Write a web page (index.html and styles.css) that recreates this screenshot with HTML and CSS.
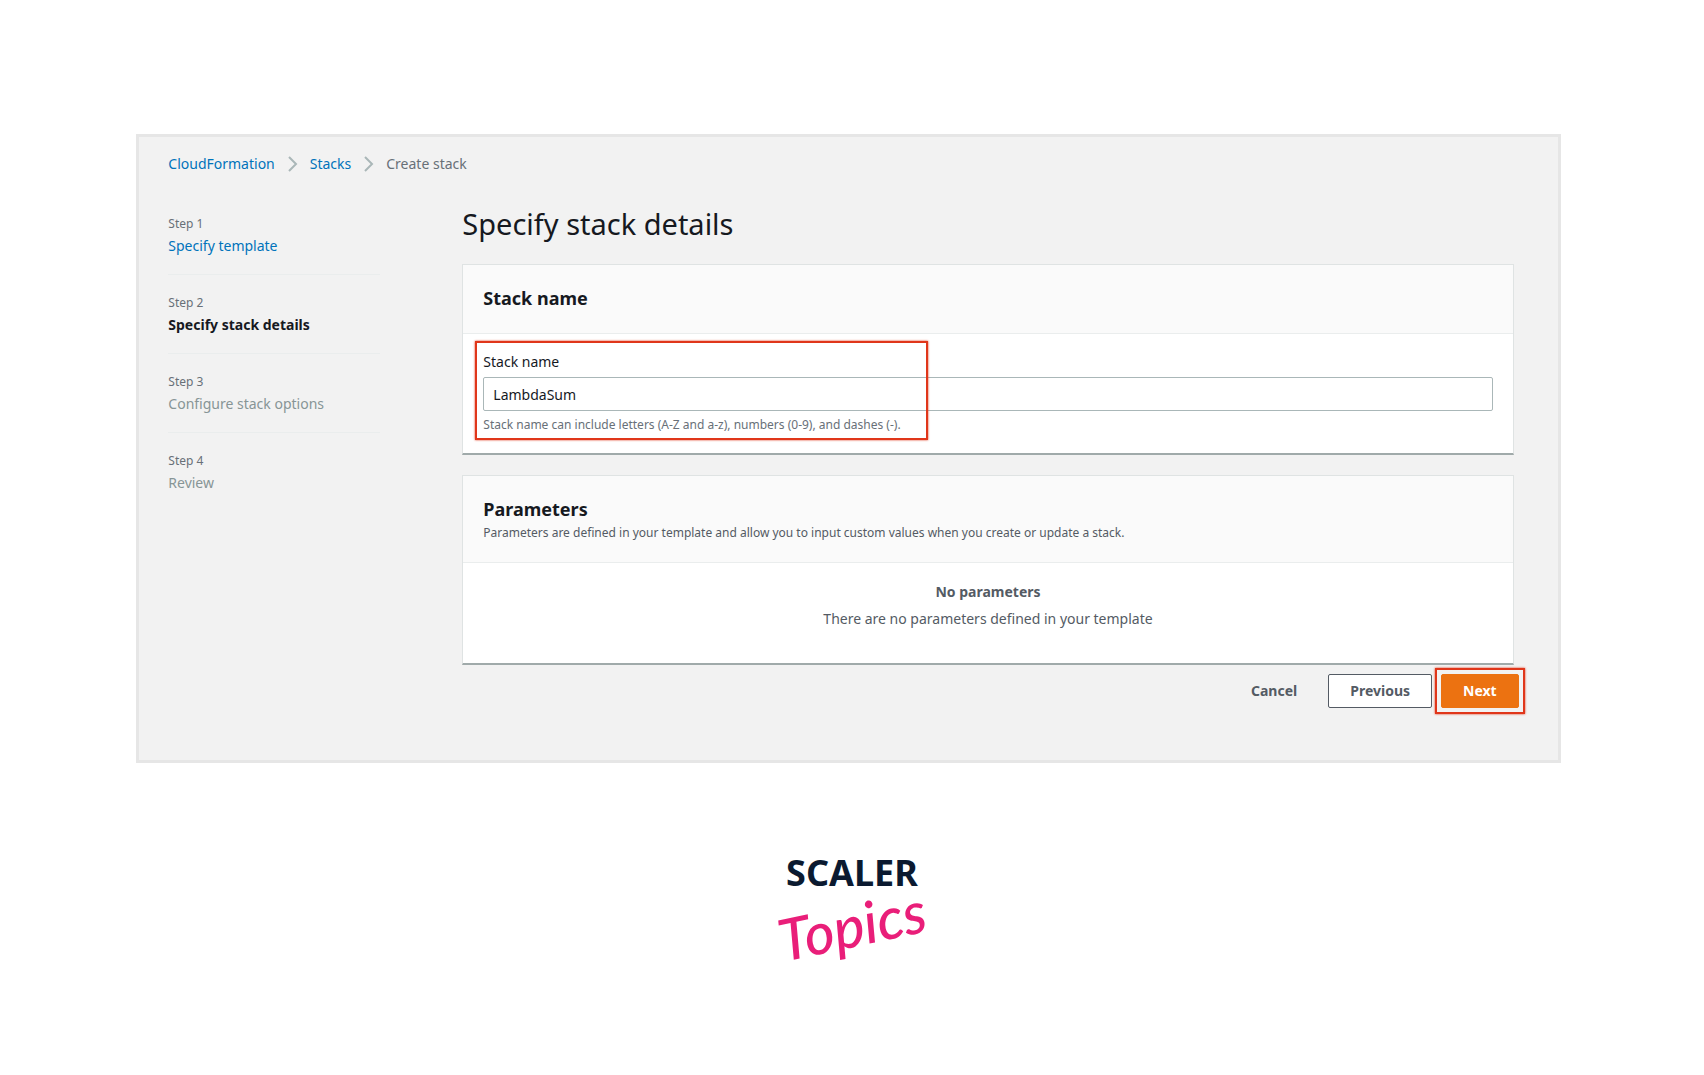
FILE: index.html
```html
<!DOCTYPE html>
<html lang="en">
<head>
<meta charset="utf-8">
<meta name="viewport" content="width=device-width, initial-scale=1">
<title>Create stack</title>
<link rel="stylesheet" href="styles.css">
</head>
<body>
<div class="console">
  <nav class="breadcrumb" aria-label="Breadcrumb">
    <a href="#">CloudFormation</a>
    <svg class="chevron" viewBox="0 0 10 16" aria-hidden="true"><path d="M1.5 1 8.5 8l-7 7"/></svg>
    <a href="#">Stacks</a>
    <svg class="chevron" viewBox="0 0 10 16" aria-hidden="true"><path d="M1.5 1 8.5 8l-7 7"/></svg>
    <span>Create stack</span>
  </nav>
  <div class="columns">
    <ol class="steps">
      <li class="step"><span class="step-number">Step 1</span><a class="step-title" href="#">Specify template</a></li>
      <li class="step current"><span class="step-number">Step 2</span><span class="step-title">Specify stack details</span></li>
      <li class="step"><span class="step-number">Step 3</span><span class="step-title">Configure stack options</span></li>
      <li class="step"><span class="step-number">Step 4</span><span class="step-title">Review</span></li>
    </ol>
    <main class="main">
      <h1>Specify stack details</h1>
      <section class="panel">
        <header class="panel-header"><h2>Stack name</h2></header>
        <div class="field">
          <label for="stack-name">Stack name</label>
          <input id="stack-name" type="text" value="LambdaSum" aria-describedby="stack-hint">
          <p class="hint" id="stack-hint">Stack name can include letters (A-Z and a-z), numbers (0-9), and dashes (-).</p>
          <div class="field-mark"></div>
        </div>
      </section>
      <section class="panel">
        <header class="panel-header tall">
          <h2>Parameters</h2>
          <p class="hint">Parameters are defined in your template and allow you to input custom values when you create or update a stack.</p>
        </header>
        <div class="empty">
          <strong>No parameters</strong>
          <p>There are no parameters defined in your template</p>
        </div>
      </section>
      <div class="actions">
        <button class="button link" type="button">Cancel</button>
        <button class="button" type="button">Previous</button>
        <div class="button-mark"><button class="button primary" type="button">Next</button></div>
      </div>
    </main>
  </div>
</div>
<footer class="brand">
  <span class="brand-name">SCALER</span>
  <span class="brand-script">Topics</span>
</footer>
</body>
</html>
```
FILE: styles.css
```css
* { box-sizing: border-box; }
body {
  margin: 0;
  padding: 134px 8% 80px;
  background: #fff;
  color: #16191f;
  font: 14px/22px "Noto Sans", "Open Sans", sans-serif;
}
h1, h2, p, ol { margin: 0; padding: 0; }
a { color: #0073bb; text-decoration: none; }
.console {
  margin-right: 7px;
  padding: 16px 44px 46px 29px;
  background: #f2f2f2;
  border: 3px solid #e6e6e6;
}
.breadcrumb { display: flex; align-items: center; gap: 12px; color: #687078; }
.chevron { width: 11px; height: 16px; fill: none; stroke: #aab7b8; stroke-width: 2; }
.columns { display: flex; gap: 82px; margin-top: 28px; }
.steps { flex: none; width: 212px; list-style: none; padding-top: 10px; }
.step { height: 80px; color: #879596; }
.step + .step { border-top: 1px solid #eaeded; padding-top: 17px; margin-top: -1px; }
.step:first-child { height: 62px; }
.step-number, .step-title { display: block; }
.step-number { font-size: 12px; color: #687078; }
.current .step-title { color: #16191f; font-weight: 700; }
.main { flex: 1; min-width: 0; }
h1 { font-size: 29px; line-height: 36px; font-weight: 400; margin: 3px 0 22px; }
h2 { font-size: 18px; line-height: 22px; font-weight: 700; }
.panel {
  background: #fff;
  border: 1px solid #dfe3e3;
  border-bottom: 2px solid #a0aaaa;
  margin-bottom: 20px;
}
.panel-header { padding: 22px 20px 24px; background: #fafafa; border-bottom: 1px solid #eaeded; }
.hint { font-size: 12px; line-height: 22px; color: #687078; }
.tall { padding-bottom: 18px; }
.tall .hint { margin-top: 2px; color: #545b64; }
.field { position: relative; padding: 17px 20px; }
.field label, .field input { display: block; }
.field input {
  width: 100%;
  height: 34px;
  margin: 4px 0 3px;
  padding: 0 9px;
  border: 1px solid #aab7b8;
  border-radius: 2px;
  font: inherit;
  color: inherit;
}
.field-mark {
  position: absolute;
  left: 12px;
  top: 7px;
  bottom: 13px;
  width: 453px;
  border: 2px solid #e0361a;
  box-shadow: 0 0 2px #e0361a;
  pointer-events: none;
}
.empty { padding: 18px 20px 33px; text-align: center; color: #545b64; }
.empty p { margin-top: 5px; }
.actions { display: flex; align-items: center; justify-content: flex-end; margin: -17px -11px 0 0; }
.button {
  height: 34px;
  padding: 0 21px;
  border: 1px solid #545b64;
  border-radius: 2px;
  background: #fff;
  color: #545b64;
  font: inherit;
  font-weight: 700;
}
.link { border-color: transparent; background: none; margin-right: 9px; }
.primary { display: block; background: #ec7211; border-color: #ec7211; color: #fff; }
.button-mark {
  margin-left: 3px;
  padding: 4px;
  border: 2px solid #e0361a;
  box-shadow: 0 0 2px #e0361a;
}
.brand { display: flex; flex-direction: column; align-items: center; padding-top: 92px; }
.brand-name { color: #0b1a30; font: 700 36px/36px "Noto Sans", sans-serif; }
.brand-script { color: #e91e79; font: italic 500 58px/68px Lato, sans-serif; transform: rotate(-12deg); }
```
